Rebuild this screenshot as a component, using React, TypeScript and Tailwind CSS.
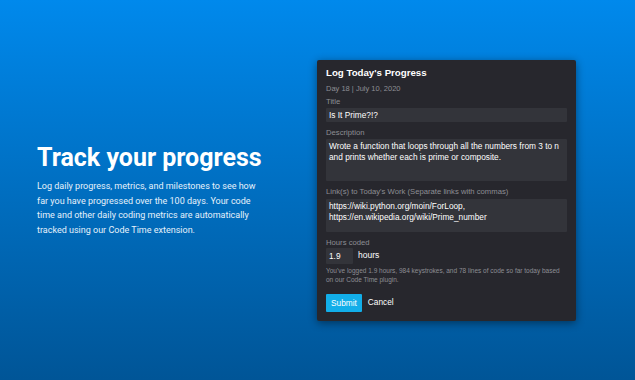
import React from "react";

export default function App() {
  const label = "text-[7.7px] text-[#8d8e94] leading-[10px]";
  const field = "bg-[#33343a] rounded-[1px] px-[3px] text-[8.3px]";
  return (
    <div
      className="w-[635px] h-[380px] flex items-center bg-gradient-to-b from-[#0089ec] to-[#005597] overflow-hidden"
      style={{ fontFamily: "Roboto, sans-serif" }}
    >
      <div className="w-[280px] pl-[37px] shrink-0 text-white">
        <h1 className="text-[25px] font-bold leading-[30px]">Track your progress</h1>
        <p className="mt-[6px] text-[9px] leading-[14.5px] text-[#e6f1fb] w-[226px]">
          Log daily progress, metrics, and milestones to see how far you have progressed over the 100 days. Your code
          time and other daily coding metrics are automatically tracked using our Code Time extension.
        </p>
      </div>
      <div
        className="ml-[37px] w-[259px] bg-[#27272d] rounded-[2px] shadow-[0_2px_8px_rgba(0,0,0,0.45)] px-[9px] pt-[6px] pb-[9px] text-white"
        style={{ fontFamily: "'Liberation Sans', Arial, sans-serif" }}
      >
        <div className="text-[9.7px] font-bold leading-[14px]">Log Today's Progress</div>
        <div className="text-[7.5px] text-[#8d8e94] leading-[12px] mt-[3px]">Day 18 | July 10, 2020</div>
        <div className={`${label} mt-[2px]`}>Title</div>
        <div className={`${field} mt-[1px] h-[14px] leading-[14px]`}>Is It Prime?!?</div>
        <div className={`${label} mt-[6px]`}>Description</div>
        <div className={`${field} mt-[1px] h-[42px] pt-[2px] leading-[11px]`}>
          Wrote a function that loops through all the numbers from 3 to n and prints whether each is prime or composite.
        </div>
        <div className={`${label} mt-[6px]`}>Link(s) to Today's Work (Separate links with commas)</div>
        <div className={`${field} mt-[2px] h-[33px] pt-[2px] leading-[11px]`}>
          https://wiki.python.org/moin/ForLoop,
          <br />
          https://en.wikipedia.org/wiki/Prime_number
        </div>
        <div className={`${label} mt-[6px]`}>Hours coded</div>
        <div className="flex items-center gap-[5px]">
          <div className={`${field} w-[27px] h-[16px] leading-[16px]`}>1.9</div>
          <div className="text-[8.5px]">hours</div>
        </div>
        <div className="mt-[2px] text-[6.5px] leading-[9px] text-[#8d8e94]">
          You've logged 1.9 hours, 984 keystrokes, and 78 lines of code so far today based on our Code Time plugin.
        </div>
        <div className="mt-[10px] flex items-center gap-[6px]">
          <div className="bg-[#12aee9] h-[18px] px-[5px] rounded-[1px] text-[8.3px] leading-[18px]">Submit</div>
          <div className="text-[8.3px]">Cancel</div>
        </div>
      </div>
    </div>
  );
}
